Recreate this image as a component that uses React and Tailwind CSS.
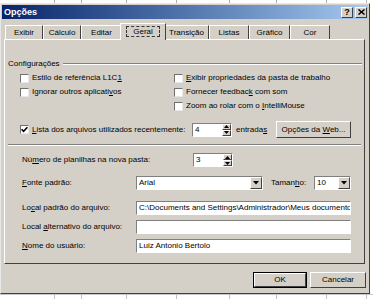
import React from "react";

const raisedCls =
  "border border-t-white border-l-white border-r-[#404040] border-b-[#404040]";
const sunkenCls =
  "border border-t-[#808080] border-l-[#808080] border-r-white border-b-white";

function U({ children }) {
  return <span className="underline underline-offset-[1px]">{children}</span>;
}

function Check({ checked, children, className = "" }) {
  return (
    <div className={"flex items-center h-[12px] " + className}>
      <div className="w-[9px] h-[9px] bg-white border border-t-[#707070] border-l-[#707070] border-r-[#e8e8e8] border-b-[#e8e8e8] flex items-center justify-center shrink-0">
        {checked && (
          <svg width="7" height="7" viewBox="0 0 7 7">
            <path d="M0.6 3.2 L2.6 5.3 L6.4 1.2" stroke="#000" strokeWidth="1.6" fill="none" />
          </svg>
        )}
      </div>
      <span className="ml-[3px] whitespace-nowrap">{children}</span>
    </div>
  );
}

function Arrow({ dir }) {
  return (
    <svg width="5" height="3" viewBox="0 0 5 3">
      {dir === "up" ? (
        <path d="M0 3 L2.5 0 L5 3 Z" fill="#000" />
      ) : (
        <path d="M0 0 L5 0 L2.5 3 Z" fill="#000" />
      )}
    </svg>
  );
}

function Spin({ value }) {
  return (
    <div className={"w-[40px] h-[14px] flex bg-white " + sunkenCls}>
      <span className="flex-1 pl-[2px] leading-[12px]">{value}</span>
      <div className="w-[9px] flex flex-col">
        <div className={"flex-1 bg-[#d4d0c8] flex items-center justify-center " + raisedCls}>
          <Arrow dir="up" />
        </div>
        <div className={"flex-1 bg-[#d4d0c8] flex items-center justify-center " + raisedCls}>
          <Arrow dir="down" />
        </div>
      </div>
    </div>
  );
}

function Combo({ value, className }) {
  return (
    <div className={"h-[14px] flex bg-white " + sunkenCls + " " + className}>
      <span className="flex-1 pl-[2px] leading-[12px]">{value}</span>
      <div className={"w-[12px] bg-[#d4d0c8] flex items-center justify-center " + raisedCls}>
        <svg width="6" height="4" viewBox="0 0 6 4">
          <path d="M0 0 L6 0 L3 3.5 Z" fill="#000" />
        </svg>
      </div>
    </div>
  );
}

function Field({ value }) {
  return (
    <div className={"w-[215px] h-[14px] bg-white overflow-hidden whitespace-nowrap " + sunkenCls}>
      <span className="pl-[2px] leading-[12px] block">{value}</span>
    </div>
  );
}

function Tab({ label, w, selected }) {
  if (selected) {
    return (
      <div
        className={
          "relative z-10 -mx-[2px] mb-[-1px] h-[17px] bg-[#d4d0c8] border-t border-l border-r border-t-white border-l-white border-r-[#404040] flex items-start justify-center pt-[2px] " +
          w
        }
      >
        <span className="border border-dashed border-[#333] px-[6px] h-[11px] leading-[9px]">
          {label}
        </span>
      </div>
    );
  }
  return (
    <div
      className={
        "h-[14px] border-t border-l border-r border-t-white border-l-white border-r-[#404040] flex items-center justify-center " +
        w
      }
    >
      <span>{label}</span>
    </div>
  );
}

function Button({ children, className, isDefault }) {
  return (
    <div className={"h-[16px] " + (isDefault ? "border border-black " : "") + className}>
      <div className={"h-full w-full bg-[#d4d0c8] flex items-center justify-center " + raisedCls}>
        <span className="whitespace-nowrap">{children}</span>
      </div>
    </div>
  );
}

export default function App() {
  const ticks = [55, 27, 45, 50, 53, 47, 50, 40];
  return (
    <div className="w-[373px] h-[299px] bg-white overflow-hidden flex flex-col font-['Liberation_Sans',Arial,sans-serif] text-[8px] leading-none text-black">
      <div className="h-[3px] flex shrink-0">
        {ticks.map((t, i) => (
          <div key={i} className="h-full border-r border-[#b0b0b0]" style={{ width: t }} />
        ))}
      </div>
      <div className="w-[370px] h-[291px] shrink-0 bg-[#d4d0c8] border-t border-l border-r border-b border-t-[#e8e8e8] border-l-[#e8e8e8] border-r-[#404040] border-b-[#404040] flex flex-col">
        {/* Title bar */}
        <div className="mx-[1px] mt-[1px] h-[14px] bg-linear-to-r from-[#0a246a] to-[#a6caf0] flex items-center">
          <span className="pl-[2px] text-white font-bold text-[9px]">Opções</span>
          <div className="ml-auto flex gap-[2px] pr-[1px]">
            <div className={"w-[12px] h-[11px] bg-[#d4d0c8] flex items-center justify-center font-bold text-[9px] " + raisedCls}>
              ?
            </div>
            <div className={"w-[12px] h-[11px] bg-[#d4d0c8] flex items-center justify-center " + raisedCls}>
              <svg width="7" height="6" viewBox="0 0 7 6">
                <path d="M0.5 0.5 L6.5 5.5 M6.5 0.5 L0.5 5.5" stroke="#000" strokeWidth="1.5" />
              </svg>
            </div>
          </div>
        </div>

        {/* Tabs */}
        <div className="mt-[4px] ml-[4px] h-[16px] flex items-end">
          <Tab label="Exibir" w="w-[38px]" />
          <Tab label="Cálculo" w="w-[38px]" />
          <Tab label="Editar" w="w-[41px]" />
          <Tab label="Geral" w="w-[46px]" selected />
          <Tab label="Transição" w="w-[45px]" />
          <Tab label="Listas" w="w-[40px]" />
          <Tab label="Gráfico" w="w-[41px]" />
          <Tab label="Cor" w="w-[40px]" />
        </div>

        {/* Panel */}
        <div className="ml-[3px] w-[361px] h-[225px] border border-t-white border-l-white border-r-[#404040] border-b-[#404040] flex flex-col">
          <div className="mt-[19px] h-[10px] flex items-center pl-[3px] pr-[2px]">
            <span>Configurações</span>
            <div className="flex-1 ml-[3px] h-[2px] border-t border-b border-t-[#808080] border-b-white" />
          </div>

          <div className="mt-[3px] pl-[15px] grid grid-cols-[154px_1fr] gap-y-[2px]">
            <Check>
              Estilo de referência L1C<U>1</U>
            </Check>
            <Check>
              <U>E</U>xibir propriedades da pasta de trabalho
            </Check>
            <Check>
              Ignorar outros aplicati<U>v</U>os
            </Check>
            <Check>
              Fornecer feedbac<U>k</U> com som
            </Check>
            <div />
            <Check>
              Zoom ao rolar com o <U>I</U>ntelliMouse
            </Check>
          </div>

          <div className="mt-[9px] h-[17px] flex items-center pl-[15px]">
            <Check checked className="w-[172px]">
              <U>L</U>ista dos arquivos utilizados recentemente:
            </Check>
            <Spin value="4" />
            <span className="ml-[4px] w-[40px]">
              entrada<U>s</U>
            </span>
            <Button className="w-[75px] h-[17px]">
              Opções da <U>W</U>eb...
            </Button>
          </div>

          <div className="mt-[6px] mx-[3px] h-[2px] border-t border-b border-t-[#808080] border-b-white" />

          <div className="mt-[7px] h-[14px] flex items-center pl-[17px]">
            <span className="w-[171px]">
              Nú<U>m</U>ero de planilhas na nova pasta:
            </span>
            <Spin value="3" />
          </div>

          <div className="mt-[9px] h-[14px] flex items-center pl-[17px]">
            <span className="w-[114px]">
              <U>F</U>onte padrão:
            </span>
            <Combo value="Arial" className="w-[127px]" />
            <span className="ml-[8px] w-[43px]">
              Taman<U>h</U>o:
            </span>
            <Combo value="10" className="w-[37px]" />
          </div>

          <div className="mt-[11px] h-[14px] flex items-center pl-[17px]">
            <span className="w-[114px]">
              Lo<U>c</U>al padrão do arquivo:
            </span>
            <Field value="C:\Documents and Settings\Administrador\Meus documentos" />
          </div>

          <div className="mt-[5px] h-[14px] flex items-center pl-[17px]">
            <span className="w-[114px]">
              Local <U>a</U>lternativo do arquivo:
            </span>
            <Field value="" />
          </div>

          <div className="mt-[5px] h-[14px] flex items-center pl-[17px]">
            <span className="w-[114px]">
              <U>N</U>ome do usuário:
            </span>
            <Field value="Luiz Antonio Bertolo" />
          </div>
        </div>

        {/* Buttons */}
        <div className="mt-[8px] flex justify-end gap-[3px] pr-[3px]">
          <Button isDefault className="w-[54px]">
            OK
          </Button>
          <Button className="w-[56px]">Cancelar</Button>
        </div>
      </div>
      <div className="flex-1 flex border-t border-[#c8c8c8]">
        {ticks.map((t, i) => (
          <div key={i} className="h-full border-r border-[#c0c0c0]" style={{ width: t }} />
        ))}
      </div>
    </div>
  );
}
